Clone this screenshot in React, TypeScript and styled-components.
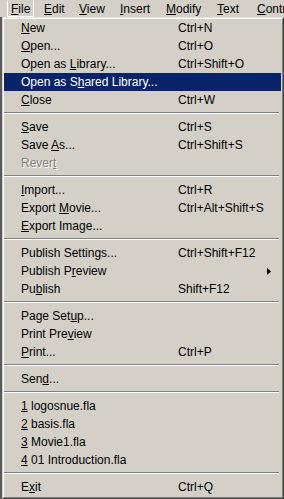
import React from "react";
import styled, { createGlobalStyle } from "styled-components";

const Global = createGlobalStyle`
  html, body { margin: 0; padding: 0; background: #d4d0c8; overflow: hidden; }
  body { font-family: "Liberation Sans", Arial, sans-serif; font-size: 12px; }
`;

const Page = styled.div`
  width: 284px;
  height: 499px;
  background: linear-gradient(to right, #5a5a5a 0 2px, #d4d0c8 2px);
  display: flex;
  flex-direction: column;
  overflow: hidden;
`;

const MenuBar = styled.div`
  height: 17px;
  display: flex;
  align-items: stretch;
  padding-left: 7px;
  background: #d4d0c8;
  white-space: nowrap;
`;

const BarItem = styled.div<{ $w?: number; $pressed?: boolean; $mr?: number }>`
  box-sizing: border-box;
  width: ${(p) => (p.$w ? `${p.$w}px` : "auto")};
  flex: none;
  margin-right: ${(p) => p.$mr ?? 0}px;
  padding-left: 3px;
  line-height: 16px;
  color: #000;
  border: 1px solid ${(p) => (p.$pressed ? "#ffffff" : "transparent")};
  border-top-color: ${(p) => (p.$pressed ? "#d4d0c8" : "transparent")};
  border-left-color: ${(p) => (p.$pressed ? "#ffffff" : "transparent")};
`;

const MenuOuter = styled.div`
  box-sizing: border-box;
  margin-left: 2px;
  width: 282px;
  border: 1px solid;
  border-color: #e8e6e0 #404040 #404040 #d4d0c8;
  background: #d4d0c8;
`;

const MenuInner = styled.div`
  border: 1px solid;
  border-color: #ffffff #808080 #808080 #ffffff;
  padding: 0 1px 1px 0;
  display: flex;
  flex-direction: column;
`;

const Row = styled.div<{ $active?: boolean; $disabled?: boolean }>`
  height: 18px;
  display: grid;
  grid-template-columns: 157px 1fr 14px;
  align-items: center;
  padding-left: 17px;
  white-space: nowrap;
  background: ${(p) => (p.$active ? "#0a246a" : "transparent")};
  color: ${(p) => (p.$active ? "#ffffff" : p.$disabled ? "#808080" : "#000000")};
  text-shadow: ${(p) => (p.$disabled ? "1px 1px 0 #ffffff" : "none")};
`;

const Label = styled.span`
  line-height: 18px;
  & u { text-underline-offset: 1px; }
`;

const Shortcut = styled.span`
  line-height: 18px;
`;

const Arrow = styled.svg`
  display: block;
  width: 4px;
  height: 7px;
`;

const Separator = styled.div`
  height: 2px;
  margin: 3px 2px 4px 0;
  border-top: 1px solid #808080;
  border-bottom: 1px solid #ffffff;
  box-sizing: border-box;
`;

type Item =
  | { sep: true }
  | {
      sep?: false;
      text: string;
      ul: number;
      key?: string;
      active?: boolean;
      disabled?: boolean;
      sub?: boolean;
    };

const items: Item[] = [
  { text: "New", ul: 0, key: "Ctrl+N" },
  { text: "Open...", ul: 0, key: "Ctrl+O" },
  { text: "Open as Library...", ul: 8, key: "Ctrl+Shift+O" },
  { text: "Open as Shared Library...", ul: 9, active: true },
  { text: "Close", ul: 0, key: "Ctrl+W" },
  { sep: true },
  { text: "Save", ul: 0, key: "Ctrl+S" },
  { text: "Save As...", ul: 5, key: "Ctrl+Shift+S" },
  { text: "Revert", ul: 5, disabled: true },
  { sep: true },
  { text: "Import...", ul: 0, key: "Ctrl+R" },
  { text: "Export Movie...", ul: 7, key: "Ctrl+Alt+Shift+S" },
  { text: "Export Image...", ul: 0 },
  { sep: true },
  { text: "Publish Settings...", ul: 14, key: "Ctrl+Shift+F12" },
  { text: "Publish Preview", ul: 9, sub: true },
  { text: "Publish", ul: 2, key: "Shift+F12" },
  { sep: true },
  { text: "Page Setup...", ul: 8 },
  { text: "Print Preview", ul: 9 },
  { text: "Print...", ul: 0, key: "Ctrl+P" },
  { sep: true },
  { text: "Send...", ul: 3 },
  { sep: true },
  { text: "1 logosnue.fla", ul: 0 },
  { text: "2 basis.fla", ul: 0 },
  { text: "3 Movie1.fla", ul: 0 },
  { text: "4 01 Introduction.fla", ul: 0 },
  { sep: true },
  { text: "Exit", ul: 1, key: "Ctrl+Q" },
];

const Mnemonic = ({ text, ul }: { text: string; ul: number }) => (
  <>
    {text.slice(0, ul)}
    <u>{text[ul]}</u>
    {text.slice(ul + 1)}
  </>
);

const bar = [
  { text: "File", ul: 0, w: 27, mr: 6, pressed: true },
  { text: "Edit", ul: 0, w: 35 },
  { text: "View", ul: 0, w: 41 },
  { text: "Insert", ul: 0, w: 46 },
  { text: "Modify", ul: 0, w: 51 },
  { text: "Text", ul: 0, w: 40 },
  { text: "Control", ul: 0 },
];

export default function App() {
  return (
    <Page>
      <Global />
      <MenuBar>
        {bar.map((b) => (
          <BarItem key={b.text} $w={b.w} $mr={b.mr} $pressed={b.pressed}>
            <Mnemonic text={b.text} ul={b.ul} />
          </BarItem>
        ))}
      </MenuBar>
      <MenuOuter>
        <MenuInner>
          {items.map((it, i) =>
            it.sep ? (
              <Separator key={i} />
            ) : (
              <Row key={i} $active={it.active} $disabled={it.disabled}>
                <Label>
                  <Mnemonic text={it.text} ul={it.ul} />
                </Label>
                <Shortcut>{it.key ?? ""}</Shortcut>
                {it.sub ? (
                  <Arrow viewBox="0 0 4 7">
                    <path d="M0 0 L4 3.5 L0 7 Z" fill="#000" />
                  </Arrow>
                ) : (
                  <span />
                )}
              </Row>
            )
          )}
        </MenuInner>
      </MenuOuter>
    </Page>
  );
}
